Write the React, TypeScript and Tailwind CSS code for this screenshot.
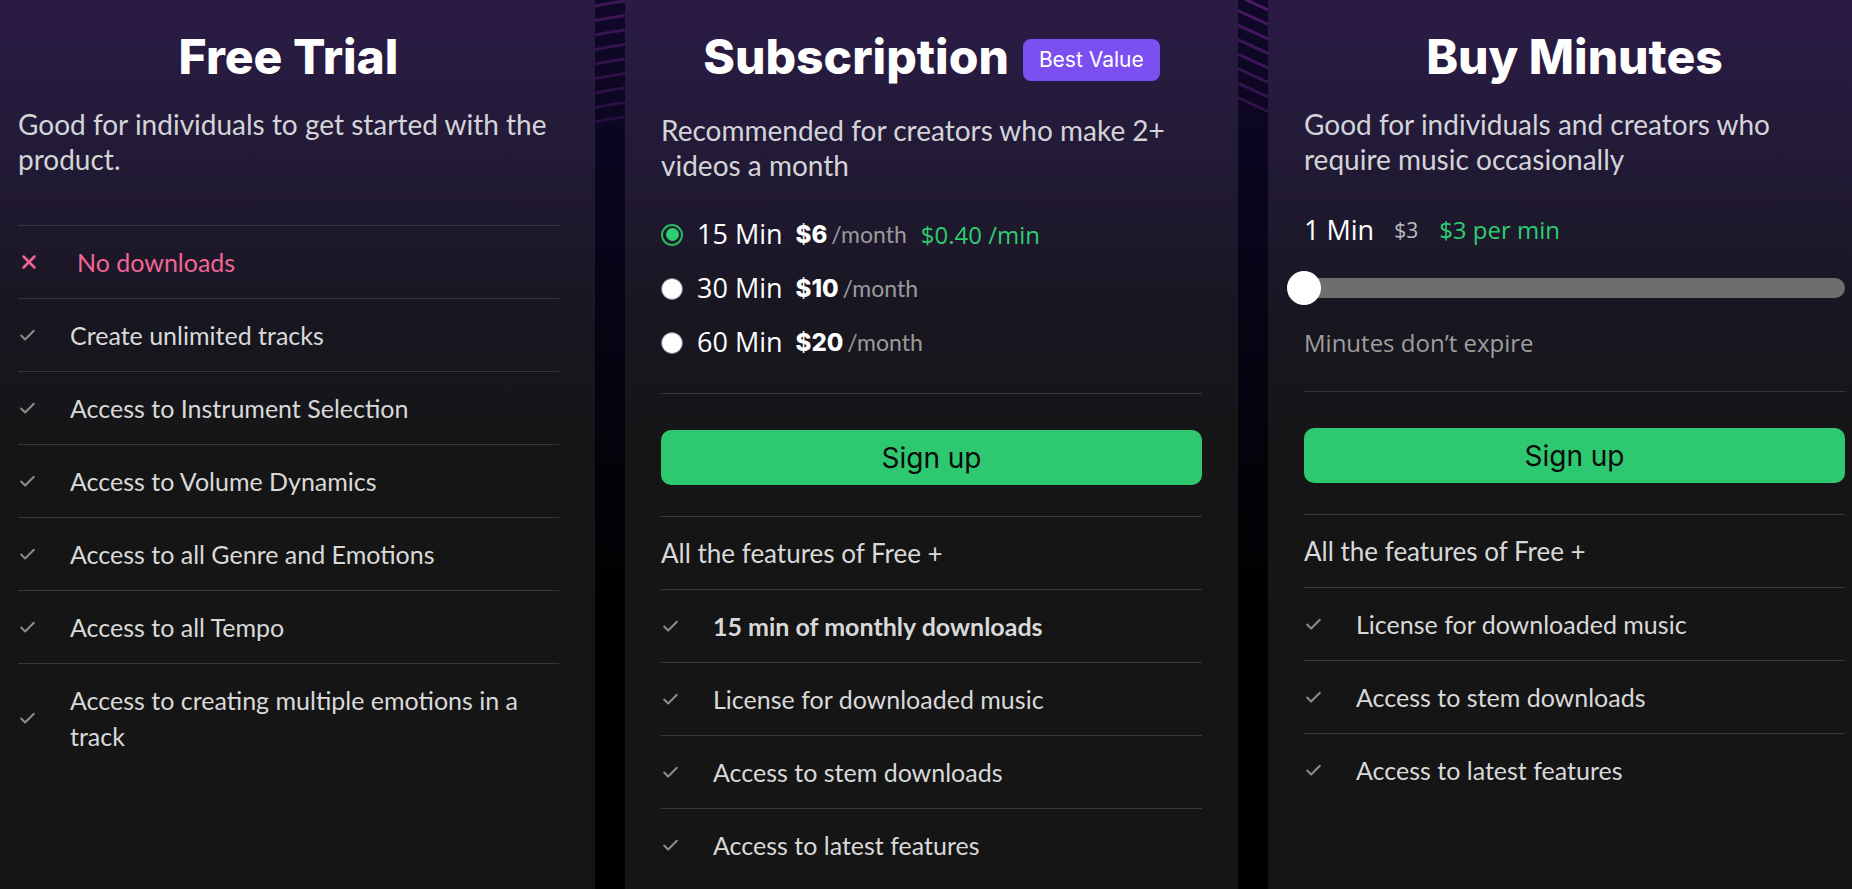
import { Check, X } from "lucide-react";

const title = "font-['Inter',sans-serif] text-[48px] font-extrabold leading-[60px] text-white";
const body = "font-['Lato',sans-serif]";
const segoe = "font-['Open_Sans',sans-serif]";

function FeatureRow({ text, bold }: { text: string; bold?: boolean }) {
  return (
    <div className="flex items-center border-t border-[#363636] py-[18px]">
      <div className="w-[52px] shrink-0 text-[#8c8c8c]">
        <Check size={19} strokeWidth={2.5} />
      </div>
      <span className={`${body} text-[25px] leading-[36px] text-[#d9d9d9] ${bold ? "font-bold" : ""}`}>
        {text}
      </span>
    </div>
  );
}

function Radio({ checked }: { checked?: boolean }) {
  if (checked) {
    return (
      <span className="w-[22px] h-[22px] shrink-0 rounded-full border-2 border-[#29b862] flex items-center justify-center">
        <span className="w-[13px] h-[13px] rounded-full bg-[#2ecc71]" />
      </span>
    );
  }
  return <span className="w-[22px] h-[22px] shrink-0 rounded-full bg-white border border-[#7a7a7a]" />;
}

function SignUp() {
  return (
    <div className="border-t border-[#363636] pt-9 pb-[31px]">
      <button className="w-full h-[55px] rounded-[10px] bg-[#2dc86f] font-['Inter',sans-serif] text-[28px] text-[#0b0b0b]">
        Sign up
      </button>
    </div>
  );
}

function AllFeatures() {
  return (
    <div className={`border-t border-[#363636] py-[18px] ${body} text-[26px] leading-[36px] text-[#d9d9d9]`}>
      All the features of Free +
    </div>
  );
}

const cardBg =
  "w-[613px] shrink-0 px-9 bg-[linear-gradient(180deg,#2b1b46_0%,#221a36_18%,#181620_36%,#151515_52%,#151515_100%)]";

function Gap({ variant }: { variant: "curve" | "diag" }) {
  const ys = Array.from({ length: 9 }, (_, i) => i * 14.5);
  return (
    <div className="w-[30px] shrink-0 bg-[linear-gradient(180deg,#0f0829_0%,#080418_30%,#030208_55%,#000_70%)]">
      <svg width="30" height="140" viewBox="0 0 30 140">
        {variant === "curve"
          ? ys.map((y, i) => (
              <path
                key={i}
                d={`M0 ${y + 6} Q15 ${y + 3} 30 ${y + 1}`}
                stroke="#3f1659"
                strokeWidth="3"
                fill="none"
                opacity={1 - i * 0.06}
              />
            ))
          : ys.slice(0, 8).map((y, i) => (
              <path
                key={i}
                d={`M0 ${y - 4} L30 ${y + 10}`}
                stroke="#4a1a66"
                strokeWidth="3"
                fill="none"
                opacity={1 - i * 0.06}
              />
            ))}
      </svg>
    </div>
  );
}

export default function App() {
  return (
    <div className="h-[889px] w-full overflow-hidden bg-black">
      <div className="flex h-full -ml-[18px]">
        {/* Free Trial */}
        <div className={cardBg}>
          <div className="pt-[27px] text-center">
            <h2 className={title}>Free Trial</h2>
          </div>
          <p className={`${body} mt-[20px] text-[28px] leading-[35px] text-[#d4d4d8]`}>
            Good for individuals to get started with the product.
          </p>
          <div className="mt-[48px]">
            <div className="flex items-center border-t border-[#363636] py-[18px]">
              <div className="w-[59px] shrink-0 text-[#f06595]">
                <X size={22} strokeWidth={2.8} />
              </div>
              <span className={`${body} text-[25px] leading-[36px] text-[#f06595]`}>No downloads</span>
            </div>
            <FeatureRow text="Create unlimited tracks" />
            <FeatureRow text="Access to Instrument Selection" />
            <FeatureRow text="Access to Volume Dynamics" />
            <FeatureRow text="Access to all Genre and Emotions" />
            <FeatureRow text="Access to all Tempo" />
            <FeatureRow text="Access to creating multiple emotions in a track" />
          </div>
        </div>

        <Gap variant="curve" />

        {/* Subscription */}
        <div className={cardBg}>
          <div className="pt-[27px] flex items-center justify-center gap-[14px]">
            <h2 className={title}>Subscription</h2>
            <span className="mt-[6px] h-[42px] px-[16px] rounded-[8px] bg-[#7b4ff0] flex items-center font-['Inter',sans-serif] text-[21px] text-white">
              Best Value
            </span>
          </div>
          <p className={`${body} mt-[26px] text-[28px] leading-[35px] text-[#d4d4d8]`}>
            Recommended for creators who make 2+ videos a month
          </p>
          <div className="mt-[40px] flex flex-col gap-[31px] pb-[39px]">
            {[
              { min: "15 Min", price: "$6", per: "$0.40 /min", checked: true },
              { min: "30 Min", price: "$10" },
              { min: "60 Min", price: "$20" },
            ].map((o) => (
              <div key={o.min} className="flex items-center h-[23px]">
                <Radio checked={o.checked} />
                <span className={`${segoe} ml-[14px] text-[27px] text-white`}>{o.min}</span>
                <span className="ml-[13px] font-['Inter',sans-serif] font-extrabold text-[24px] text-white">
                  {o.price}
                </span>
                <span className={`${body} ml-[4px] text-[23px] text-[#9b9b9b]`}>/month</span>
                {o.per && <span className={`${segoe} ml-[14px] text-[24px] text-[#2ecc71]`}>{o.per}</span>}
              </div>
            ))}
          </div>
          <SignUp />
          <AllFeatures />
          <FeatureRow text="15 min of monthly downloads" bold />
          <FeatureRow text="License for downloaded music" />
          <FeatureRow text="Access to stem downloads" />
          <FeatureRow text="Access to latest features" />
        </div>

        <Gap variant="diag" />

        {/* Buy Minutes */}
        <div className={cardBg}>
          <div className="pt-[27px] text-center">
            <h2 className={title}>Buy Minutes</h2>
          </div>
          <p className={`${body} mt-[20px] text-[28px] leading-[35px] text-[#d4d4d8]`}>
            Good for individuals and creators who require music occasionally
          </p>
          <div className="mt-[36px] flex items-center h-[34px] leading-[34px]">
            <span className={`${segoe} text-[27px] text-white`}>1 Min</span>
            <span className={`${segoe} ml-[20px] text-[21px] text-[#bdbdbd]`}>$3</span>
            <span className={`${segoe} ml-[21px] text-[24px] text-[#2ecc71]`}>$3 per min</span>
          </div>
          <div className="relative mt-[31px] -ml-[14px] h-[20px] rounded-full bg-[#6e6e6e]">
            <span className="absolute -left-[3px] top-1/2 -translate-y-1/2 w-[34px] h-[34px] rounded-full bg-white" />
          </div>
          <p className={`${segoe} mt-[30px] text-[24px] leading-[30px] text-[#9e9e9e]`}>Minutes don’t expire</p>
          <div className="mt-[33px]">
            <SignUp />
            <AllFeatures />
            <FeatureRow text="License for downloaded music" />
            <FeatureRow text="Access to stem downloads" />
            <FeatureRow text="Access to latest features" />
          </div>
        </div>
      </div>
    </div>
  );
}
